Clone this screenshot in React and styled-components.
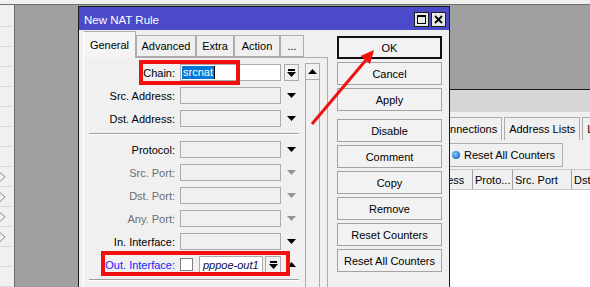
import styled, { createGlobalStyle } from "styled-components";

const GlobalStyle = createGlobalStyle`
  html, body {
    margin: 0;
    padding: 0;
    background: #f0f0f0;
  }
  body {
    font-family: "Liberation Sans", Arial, sans-serif;
    font-size: 11px;
    color: #000;
  }
  * {
    box-sizing: border-box;
  }
`;

// 오른쪽 버튼 목록
const ACTIONS = [
  { label: "OK", primary: true },
  { label: "Cancel" },
  { label: "Apply" },
  { label: "Disable", spaced: true },
  { label: "Comment" },
  { label: "Copy" },
  { label: "Remove" },
  { label: "Reset Counters" },
  { label: "Reset All Counters" },
];

const TABS = [
  { label: "General", width: 53, active: true },
  { label: "Advanced", width: 60 },
  { label: "Extra", width: 38 },
  { label: "Action", width: 46 },
  { label: "...", width: 24 },
];

const TOP_FIELDS = [
  { label: "Chain:", kind: "chain" },
  { label: "Src. Address:" },
  { label: "Dst. Address:" },
];

const BOTTOM_FIELDS = [
  { label: "Protocol:" },
  { label: "Src. Port:", disabled: true },
  { label: "Dst. Port:", disabled: true },
  { label: "Any. Port:", disabled: true },
  { label: "In. Interface:" },
  { label: "Out. Interface:", kind: "out" },
];

const HEADER_COLS = [
  { label: "Address", width: 58, pad: 9 },
  { label: "Proto...", width: 40 },
  { label: "Src. Port", width: 59 },
  { label: "Dst. Port", width: 80 },
];

// 작은 아이콘들
const DownTri = ({ color = "#000" }) => (
  <svg width="9" height="5" viewBox="0 0 9 5">
    <polygon points="0,0 9,0 4.5,5" fill={color} />
  </svg>
);

const UpTri = ({ color = "#000" }) => (
  <svg width="9" height="5" viewBox="0 0 9 5">
    <polygon points="0,5 9,5 4.5,0" fill={color} />
  </svg>
);

const ListIcon = () => (
  <svg width="9" height="8" viewBox="0 0 9 8">
    <rect x="1" y="0" width="7" height="2" fill="#000" />
    <polygon points="0,3 9,3 4.5,8" fill="#000" />
  </svg>
);

const MaxIcon = () => (
  <svg width="9" height="9" viewBox="0 0 9 9">
    <rect x="0.5" y="0.5" width="8" height="8" fill="none" stroke="#000" />
    <rect x="0" y="0" width="9" height="2" fill="#000" />
  </svg>
);

const CloseIcon = () => (
  <svg width="9" height="9" viewBox="0 0 9 9">
    <path d="M1 1 L8 8 M8 1 L1 8" stroke="#000" strokeWidth="1.8" />
  </svg>
);

const SideArrow = () => (
  <svg width="6" height="10" viewBox="0 0 6 10">
    <path d="M0 0.5 L5 5 L0 9.5" fill="none" stroke="#8a8a8a" />
  </svg>
);

const FieldRow = ({ label, kind, disabled }) => {
  if (kind === "chain") {
    return (
      <St.Row>
        <St.Label>{label}</St.Label>
        <St.Input $white>
          <St.Selected>srcnat</St.Selected>
          <St.Caret />
        </St.Input>
        <St.ArrowCell>
          <St.DropButton $width={15}>
            <ListIcon />
          </St.DropButton>
        </St.ArrowCell>
      </St.Row>
    );
  }

  if (kind === "out") {
    return (
      <St.Row>
        <St.Label $tone="blue">{label}</St.Label>
        <St.Compound>
          <St.CheckBox />
          <St.ValueBox>pppoe-out1</St.ValueBox>
          <St.DropButton $width={16}>
            <ListIcon />
          </St.DropButton>
        </St.Compound>
        <St.ArrowCell>
          <UpTri />
        </St.ArrowCell>
      </St.Row>
    );
  }

  return (
    <St.Row>
      <St.Label $tone={disabled ? "gray" : "normal"}>{label}</St.Label>
      <St.Input />
      <St.ArrowCell>
        <DownTri color={disabled ? "#8e9590" : "#000"} />
      </St.ArrowCell>
    </St.Row>
  );
};

const App = () => {
  return (
    <>
      <GlobalStyle />
      <St.Desktop>
        <St.TopStrip />
        <St.Workspace>
          <St.SideList>
            {Array.from({ length: 14 }).map((_, idx) => (
              <St.SideRow key={idx}>
                {idx >= 8 && idx <= 11 && <SideArrow />}
              </St.SideRow>
            ))}
          </St.SideList>

          <St.MdiArea>
            {/* 뒤에 있는 방화벽 창 */}
            <St.BackWindow>
              <St.Caption />
              <St.BackTabs>
                <St.BackTab>Connections</St.BackTab>
                <St.BackTab>Address Lists</St.BackTab>
                <St.BackTab>Layer7 Protocols</St.BackTab>
              </St.BackTabs>
              <St.Toolbar>
                <St.ToolButton>
                  <St.Dot />
                  Reset All Counters
                </St.ToolButton>
              </St.Toolbar>
              <St.HeaderRow>
                {HEADER_COLS.map((col) => (
                  <St.HeaderCell key={col.label} $width={col.width} $pad={col.pad}>
                    {col.label}
                  </St.HeaderCell>
                ))}
              </St.HeaderRow>
              <St.TableBody />
            </St.BackWindow>

            {/* NAT 규칙 다이얼로그 */}
            <St.Dialog>
              <St.TitleBar>
                <St.Title>New NAT Rule</St.Title>
                <St.TitleButtons>
                  <St.TitleButton>
                    <MaxIcon />
                  </St.TitleButton>
                  <St.TitleButton>
                    <CloseIcon />
                  </St.TitleButton>
                </St.TitleButtons>
              </St.TitleBar>

              <St.Body>
                <St.LeftPane>
                  <St.TabStrip>
                    {TABS.map((tab) => (
                      <St.Tab key={tab.label} $width={tab.width} $active={tab.active}>
                        {tab.label}
                      </St.Tab>
                    ))}
                  </St.TabStrip>
                  <St.TabPanel>
                    <St.Form>
                      {TOP_FIELDS.map((f) => (
                        <FieldRow key={f.label} {...f} />
                      ))}
                      <St.Separator />
                      {BOTTOM_FIELDS.map((f) => (
                        <FieldRow key={f.label} {...f} />
                      ))}
                      <St.Separator />
                    </St.Form>
                    <St.ScrollBar>
                      <St.ScrollButton>
                        <UpTri />
                      </St.ScrollButton>
                    </St.ScrollBar>
                  </St.TabPanel>
                </St.LeftPane>

                <St.ButtonColumn>
                  {ACTIONS.map((a) => (
                    <St.ActionButton key={a.label} $primary={a.primary} $spaced={a.spaced}>
                      {a.label}
                    </St.ActionButton>
                  ))}
                </St.ButtonColumn>
              </St.Body>
            </St.Dialog>
          </St.MdiArea>
        </St.Workspace>

        {/* 빨간 표시 */}
        <St.Highlight $left={139} $top={60} $width={101} $height={25} />
        <St.Highlight $left={101} $top={251} $width={189} $height={25} />
        <St.Overlay width="590" height="287" viewBox="0 0 590 287">
          <line x1="312" y1="124" x2="366" y2="60" stroke="#f01010" strokeWidth="3" />
          <polygon points="374,50 370,64 360.5,56" fill="#f01010" />
        </St.Overlay>
      </St.Desktop>
    </>
  );
};

export default App;

const St = {
  Desktop: styled.div`
    position: relative;
    display: flex;
    flex-direction: column;

    width: 590px;
    height: 287px;
    overflow: hidden;

    background: #f0f0f0;
  `,

  TopStrip: styled.div`
    flex: none;
    height: 5px;
    border-bottom: 1px solid #6f6f6f;
    background: #f0f0f0;
  `,

  Workspace: styled.div`
    flex: 1;
    display: flex;
    min-height: 0;
  `,

  SideList: styled.div`
    flex: none;
    width: 15px;
    padding-top: 2px;
    border-right: 1px solid #6a6a6a;
    background: #f0f0f0;
    overflow: hidden;
  `,

  SideRow: styled.div`
    display: flex;
    align-items: center;

    height: 20px;
    margin-right: 2px;
    border-bottom: 1px solid #d9d9d9;
  `,

  MdiArea: styled.div`
    position: relative;
    flex: 1;
    background: #a0a0a0;
  `,

  BackWindow: styled.div`
    position: absolute;
    left: 400px;
    top: 84px;
    right: 0;
    bottom: 0;

    display: flex;
    flex-direction: column;

    border-top: 1px solid #1e1e1e;
    background: #f0f0f0;
  `,

  Caption: styled.div`
    flex: none;
    height: 22px;
    background: #d6d6d6;
  `,

  BackTabs: styled.div`
    display: flex;
    gap: 2px;

    height: 23px;
    margin-top: 5px;
    padding-left: 16px;
  `,

  BackTab: styled.div`
    display: flex;
    align-items: center;

    padding: 0 4px;
    border: 1px solid #adadad;
    border-bottom: none;
    white-space: nowrap;
    background: #f0f0f0;
  `,

  Toolbar: styled.div`
    display: flex;
    padding: 3px 0 0 31px;
  `,

  ToolButton: styled.div`
    display: flex;
    align-items: center;
    gap: 4px;

    height: 24px;
    padding: 0 7px 0 5px;

    border: 1px solid #adadad;
    background: #f0f0f0;
    white-space: nowrap;
  `,

  Dot: styled.span`
    width: 8px;
    height: 8px;
    border-radius: 50%;
    background: radial-gradient(circle at 40% 40%, #8fd0ff, #1e6fd0 70%);
  `,

  HeaderRow: styled.div`
    display: flex;
    height: 21px;
    margin-top: 2px;
    border-top: 1px solid #c8c8c8;
    border-bottom: 1px solid #c8c8c8;
    background: #f0f0f0;
  `,

  HeaderCell: styled.div`
    flex: none;
    display: flex;
    align-items: center;

    width: ${({ $width }) => $width}px;
    padding-left: ${({ $pad }) => $pad ?? 2}px;
    border-right: 1px solid #a0a0a0;
    white-space: nowrap;
    overflow: hidden;
  `,

  TableBody: styled.div`
    flex: 1;
    background: #fff;
  `,

  Dialog: styled.div`
    position: absolute;
    left: 63px;
    top: 1px;

    width: 372px;
    height: 300px;

    border: 1px solid #1b1b1b;
    background: #f0f0f0;
  `,

  TitleBar: styled.div`
    display: flex;
    align-items: center;
    justify-content: space-between;

    height: 23px;
    padding: 2px 3px 0 5px;

    background: #4a4acb;
  `,

  Title: styled.span`
    color: #fff;
    font-size: 11.5px;
  `,

  TitleButtons: styled.div`
    display: flex;
    gap: 2px;
  `,

  TitleButton: styled.div`
    display: flex;
    align-items: center;
    justify-content: center;

    width: 15px;
    height: 15px;

    border: 1px solid #1e1e1e;
    background: #e9e9e9;
  `,

  Body: styled.div`
    display: flex;
    gap: 9px;
    padding: 1px 0 0 4px;
  `,

  LeftPane: styled.div`
    display: flex;
    flex-direction: column;
    width: 245px;
  `,

  TabStrip: styled.div`
    display: flex;
    align-items: flex-end;
    height: 26px;
  `,

  Tab: styled.div`
    position: relative;
    z-index: 1;
    display: flex;
    align-items: center;
    justify-content: center;

    width: ${({ $width }) => $width}px;
    height: ${({ $active }) => ($active ? 27 : 22)}px;
    margin-bottom: ${({ $active }) => ($active ? -1 : 0)}px;

    border: 1px solid #adadad;
    border-bottom: ${({ $active }) => ($active ? "none" : "1px solid #adadad")};
    border-left-color: ${({ $active }) => ($active ? "#ffffff" : "#adadad")};
    background: ${({ $active }) => ($active ? "#f4f4f4" : "#f0f0f0")};
  `,

  TabPanel: styled.div`
    display: flex;
    height: 240px;
    padding-right: 7px;

    border: 1px solid #adadad;
    border-left-color: #ffffff;
    background: #f0f0f0;
  `,

  Form: styled.div`
    display: flex;
    flex-direction: column;
    gap: 6px;

    width: 221px;
    padding: 6px 0 0 5px;
  `,

  Row: styled.div`
    display: flex;
    align-items: center;
    height: 17px;
  `,

  Label: styled.span`
    flex: none;
    width: 86px;
    margin-right: 5px;

    text-align: right;
    white-space: nowrap;
    color: ${({ $tone }) =>
      $tone === "gray" ? "#6d6d6d" : $tone === "blue" ? "#1a1aff" : "#000"};
  `,

  Input: styled.div`
    flex: none;
    display: flex;
    align-items: center;

    width: 101px;
    height: 17px;
    padding-left: 1px;

    border: 1px solid #ababab;
    background: ${({ $white }) => ($white ? "#fff" : "#f0f0f0")};
  `,

  Selected: styled.span`
    height: 13px;
    padding: 0 1px;
    line-height: 13px;

    color: #fff;
    background: #0078d7;
  `,

  Caret: styled.span`
    width: 1px;
    height: 13px;
    background: #000;
  `,

  Compound: styled.div`
    flex: none;
    display: flex;
    align-items: center;
    width: 101px;
  `,

  CheckBox: styled.span`
    flex: none;
    width: 13px;
    height: 13px;
    margin-right: 6px;
    border: 1px solid #7f7f7f;
    background: #fff;
  `,

  ValueBox: styled.div`
    flex: none;
    display: flex;
    align-items: center;

    width: 64px;
    height: 17px;
    margin-right: 2px;
    padding-left: 3px;

    border: 1px solid #ababab;
    background: #fff;
    color: #0b0b4a;
    font-style: italic;
    white-space: nowrap;
  `,

  ArrowCell: styled.div`
    flex: none;
    display: flex;
    align-items: center;
    justify-content: center;

    width: 15px;
    margin-left: 3px;
  `,

  DropButton: styled.div`
    flex: none;
    display: flex;
    align-items: center;
    justify-content: center;

    width: ${({ $width }) => $width}px;
    height: 17px;

    border: 1px solid #ababab;
    background: #f0f0f0;
  `,

  Separator: styled.div`
    width: 210px;
    height: 2px;
    border-top: 1px solid #a0a0a0;
    border-bottom: 1px solid #ffffff;
  `,

  ScrollBar: styled.div`
    display: flex;
    flex-direction: column;

    width: 15px;
    margin-top: 5px;

    border-left: 1px solid #ababab;
    border-right: 1px solid #ababab;
    background: #f0f0f0;
  `,

  ScrollButton: styled.div`
    display: flex;
    align-items: center;
    justify-content: center;

    height: 17px;
    border-top: 1px solid #ababab;
    border-bottom: 1px solid #ababab;
  `,

  ButtonColumn: styled.div`
    display: flex;
    flex-direction: column;
    gap: 3px;

    width: 105px;
    margin-top: 5px;
  `,

  ActionButton: styled.div`
    display: flex;
    align-items: center;
    justify-content: center;

    height: 23px;
    margin-top: ${({ $spaced }) => ($spaced ? 5 : 0)}px;

    border: ${({ $primary }) => ($primary ? "2px solid #111" : "1px solid #a3a3a3")};
    background: #f2f2f2;
    white-space: nowrap;
  `,

  Highlight: styled.div`
    position: absolute;
    left: ${({ $left }) => $left}px;
    top: ${({ $top }) => $top}px;
    width: ${({ $width }) => $width}px;
    height: ${({ $height }) => $height}px;

    border: 4px solid #f01010;
    pointer-events: none;
  `,

  Overlay: styled.svg`
    position: absolute;
    left: 0;
    top: 0;
    pointer-events: none;
  `,
};
